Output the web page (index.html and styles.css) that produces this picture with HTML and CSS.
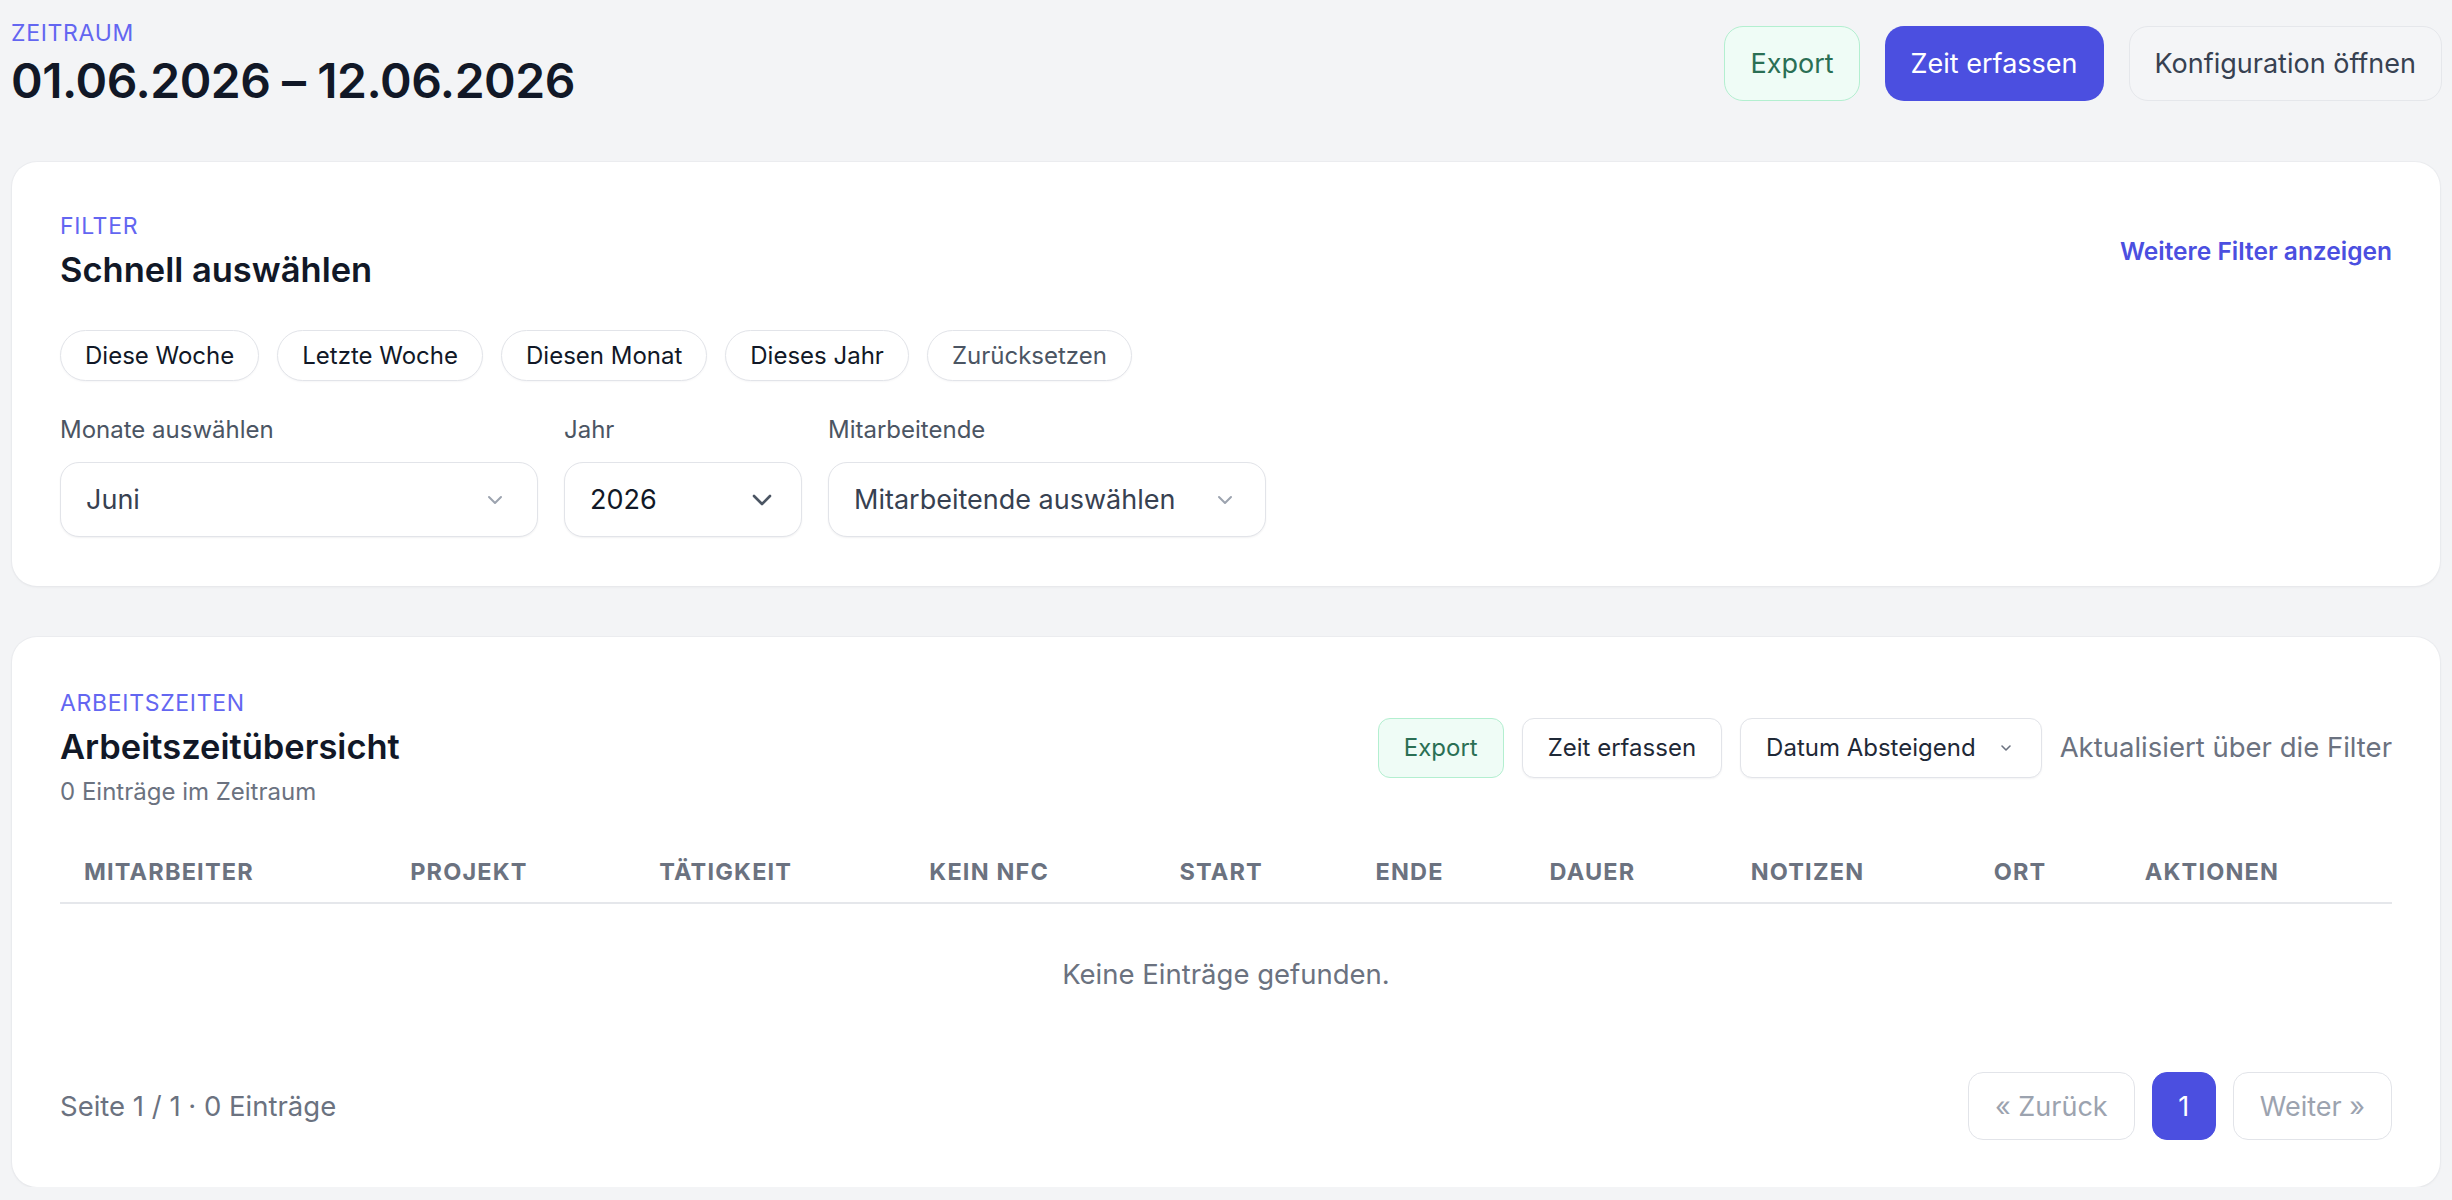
FILE: index.html
```html
<!DOCTYPE html>
<html lang="de">
<head>
<meta charset="utf-8">
<title>Arbeitszeiten :: Zeitraum</title>
<link rel="stylesheet" href="styles.css">
</head>
<body>
<main class="page">
  <header class="page-head">
    <div class="head-text">
      <p class="eyebrow">Zeitraum</p>
      <h1 class="range">01.06.2026 – 12.06.2026</h1>
    </div>
    <div class="head-actions">
      <button type="button" class="btn btn-export">Export</button>
      <button type="button" class="btn btn-primary">Zeit erfassen</button>
      <button type="button" class="btn btn-muted">Konfiguration öffnen</button>
    </div>
  </header>

  <section class="card filter">
    <div class="card-head">
      <div>
        <p class="eyebrow">Filter</p>
        <h2 class="card-title">Schnell auswählen</h2>
      </div>
      <a href="#" class="more-link">Weitere Filter anzeigen</a>
    </div>

    <div class="chips">
      <button type="button" class="chip">Diese Woche</button>
      <button type="button" class="chip">Letzte Woche</button>
      <button type="button" class="chip">Diesen Monat</button>
      <button type="button" class="chip">Dieses Jahr</button>
      <button type="button" class="chip chip-reset">Zurücksetzen</button>
    </div>

    <div class="fields">
      <div class="field field-month">
        <label>Monate auswählen</label>
        <div class="select">
          <span>Juni</span>
          <svg class="chev" width="16" height="10" viewBox="0 0 16 10"><path d="M2 2l6 6 6-6" fill="none" stroke="currentColor" stroke-width="2" stroke-linecap="round" stroke-linejoin="round"/></svg>
        </div>
      </div>
      <div class="field field-year">
        <label>Jahr</label>
        <div class="select select-native">
          <span>2026</span>
          <svg class="chev" width="22" height="14" viewBox="0 0 22 14"><path d="M3 3l8 8 8-8" fill="none" stroke="currentColor" stroke-width="2.6" stroke-linecap="round" stroke-linejoin="round"/></svg>
        </div>
      </div>
      <div class="field field-staff">
        <label>Mitarbeitende</label>
        <div class="select">
          <span>Mitarbeitende auswählen</span>
          <svg class="chev" width="16" height="10" viewBox="0 0 16 10"><path d="M2 2l6 6 6-6" fill="none" stroke="currentColor" stroke-width="2" stroke-linecap="round" stroke-linejoin="round"/></svg>
        </div>
      </div>
    </div>
  </section>

  <section class="card times">
    <div class="card-head">
      <div>
        <p class="eyebrow">Arbeitszeiten</p>
        <h2 class="card-title">Arbeitszeitübersicht</h2>
        <p class="sub">0 Einträge im Zeitraum</p>
      </div>
      <div class="toolbar">
        <button type="button" class="btn-sm btn-export">Export</button>
        <button type="button" class="btn-sm btn-white">Zeit erfassen</button>
        <div class="btn-sm btn-white sort">
          <span>Datum Absteigend</span>
          <svg class="chev" width="12" height="8" viewBox="0 0 12 8"><path d="M2 2l4 4 4-4" fill="none" stroke="currentColor" stroke-width="1.6" stroke-linecap="round" stroke-linejoin="round"/></svg>
        </div>
        <span class="hint">Aktualisiert über die Filter</span>
      </div>
    </div>

    <table class="grid">
      <colgroup>
        <col class="c-staff"><col class="c-project"><col class="c-task"><col class="c-nfc"><col class="c-start">
        <col class="c-end"><col class="c-dur"><col class="c-notes"><col class="c-place"><col class="c-actions">
      </colgroup>
      <thead>
        <tr>
          <th>Mitarbeiter</th>
          <th>Projekt</th>
          <th>Tätigkeit</th>
          <th>Kein NFC</th>
          <th>Start</th>
          <th>Ende</th>
          <th>Dauer</th>
          <th>Notizen</th>
          <th>Ort</th>
          <th>Aktionen</th>
        </tr>
      </thead>
      <tbody>
        <tr><td colspan="10" class="empty">Keine Einträge gefunden.</td></tr>
      </tbody>
    </table>

    <div class="pager">
      <p class="pager-info">Seite 1 / 1 · 0 Einträge</p>
      <nav class="pager-nav">
        <button type="button" class="page-btn" disabled>« Zurück</button>
        <button type="button" class="page-btn is-current">1</button>
        <button type="button" class="page-btn" disabled>Weiter »</button>
      </nav>
    </div>
  </section>
</main>
</body>
</html>
```

FILE: styles.css
```css
*{margin:0;padding:0;box-sizing:border-box}
body{background:#f3f4f6;font-family:Inter,"Noto Sans",sans-serif;color:#111827}
button{font-family:inherit;cursor:pointer}
a{text-decoration:none}

.page{padding:18px 12px 0}

/* header */
.page-head{display:flex;justify-content:space-between;align-items:center;margin:0 -2px 0 -1px}
.eyebrow{font-size:23px;line-height:31px;letter-spacing:.03em;text-transform:uppercase;color:#6366f1}
.range{margin-top:4px;font-size:48px;line-height:56px;font-weight:600;letter-spacing:-.01em;color:#111827}
.head-actions{display:flex;gap:25px}
.btn{height:75px;padding:0 25px;border:1.5px solid transparent;border-radius:19px;font-size:27px;line-height:37px}
.btn-export{background:#effcf6;border:1.5px solid #b3efd0;color:#2a6f54}
.btn-primary{background:#4b4fe0;color:#fff}
.btn-muted{background:#f4f5f7;border-color:#e5e7eb;color:#374151}

/* cards */
.card{background:#fff;border-radius:25px;padding:49px 48px;box-shadow:0 0 0 1px rgba(229,231,235,.55),0 1px 3px rgba(17,24,39,.06)}
.filter{margin-top:53px}
.times{margin-top:51px;padding-top:51px;padding-bottom:47px}
.card-head{display:flex;justify-content:space-between;align-items:center}
.card-title{margin-top:6px;font-size:34.5px;line-height:44px;font-weight:600;color:#111827}
.more-link{font-size:24.5px;line-height:31px;font-weight:600;color:#4b4fe0}
.sub{margin-top:7px;font-size:24px;line-height:31px;color:#6b7280}

/* quick chips */
.chips{display:flex;gap:18px;margin-top:38px}
.chip{padding:9px 24px;background:#fff;border:1px solid #e2e4e9;border-radius:999px;box-shadow:0 1px 2px rgba(17,24,39,.04);font-size:24px;line-height:31px;color:#111827}
.chip-reset{color:#4b5563}

/* selects */
.fields{display:flex;gap:26px;margin-top:33px}
.field label{display:block;font-size:24px;line-height:31px;color:#4b5563}
.field-month{width:478px}
.field-year{width:238px}
.field-staff{width:438px}
.select{display:flex;justify-content:space-between;align-items:center;height:75px;margin-top:17px;padding:0 32px 0 25px;background:#fff;border:1px solid #e2e4e9;border-radius:19px;box-shadow:0 1px 2px rgba(17,24,39,.06);font-size:27px;color:#374151}
.select .chev{color:#9ca3af}
.select-native{padding-right:28px;color:#111827}
.select-native .chev{color:#4b5563}
.field-month .select{padding-right:34px}

/* toolbar */
.toolbar{display:flex;align-items:center;gap:18px}
.btn-sm{height:60px;padding:0 25px;border-radius:12px;font-size:24px;line-height:31px}
.btn-white{background:#fff;border:1px solid #e2e4e9;box-shadow:0 1px 2px rgba(17,24,39,.05);color:#1f2937}
.sort{display:flex;align-items:center;gap:24px;padding-right:29px}
.sort .chev{color:#6b7280}
.hint{font-size:27.5px;line-height:37px;color:#6b7280}

/* table */
.grid{width:100%;margin-top:31px;border-collapse:collapse;table-layout:fixed}
.c-staff{width:326px}
.c-project{width:249px}
.c-task{width:270px}
.c-nfc{width:250px}
.c-start{width:196px}
.c-end{width:174px}
.c-dur{width:201px}
.c-notes{width:243px}
.c-place{width:151px}
.c-actions{width:271px}
.grid th{padding:18px 24px 15px;border-bottom:2px solid #e5e7eb;text-align:left;font-size:23.5px;line-height:31px;font-weight:700;letter-spacing:.05em;text-transform:uppercase;color:#6b7280}
.grid .empty{padding:52px 0;text-align:center;font-size:27.5px;line-height:37px;color:#6b7280}

/* pagination */
.pager{display:flex;justify-content:space-between;align-items:center;margin-top:27px}
.pager-info{font-size:27.5px;line-height:31px;color:#6b7280}
.pager-nav{display:flex;gap:17px}
.page-btn{height:68px;padding:0 26px;background:#fff;border:1px solid #e2e4e9;border-radius:15px;font-size:27px;line-height:37px;color:#9ca3af}
.page-btn.is-current{width:64px;padding:0;background:#4b4fe0;border-color:#4b4fe0;color:#fff}
```
